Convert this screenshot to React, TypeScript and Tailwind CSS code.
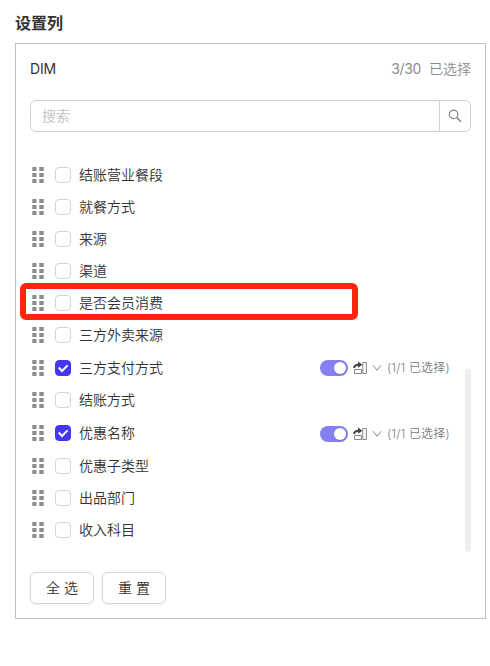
import { useState } from "react";

interface Column {
    name: string;
    checked?: boolean;
    highlighted?: boolean;
}

const initialColumns: Column[] = [
    { name: "结账营业餐段" },
    { name: "就餐方式" },
    { name: "来源" },
    { name: "渠道" },
    { name: "是否会员消费", highlighted: true },
    { name: "三方外卖来源" },
    { name: "三方支付方式", checked: true },
    { name: "结账方式" },
    { name: "优惠名称", checked: true },
    { name: "优惠子类型" },
    { name: "出品部门" },
    { name: "收入科目" },
]

function DragHandle() {
    return (
        <svg width="12" height="16" viewBox="0 0 12 16" fill="#8c8c8c" className="ml-0.5 shrink-0 cursor-move">
            {[0, 6, 12].map(y => (
                <g key={y}>
                    <rect x="0.3" y={y} width="4.2" height="4" />
                    <rect x="7.3" y={y} width="4.4" height="4" />
                </g>
            ))}
        </svg>
    )
}

function Checkbox({ checked, onClick }: { checked?: boolean; onClick: () => void }) {
    return (
        <button
            role="checkbox"
            aria-checked={!!checked}
            onClick={onClick}
            className={`ml-[11px] size-4 shrink-0 rounded border ${checked ? "border-[#4338ee] bg-[#4338ee]" : "border-[#d4d4d4] bg-white"}`}
        >
            {checked && (
                <svg width="14" height="14" viewBox="0 0 14 14" fill="none" stroke="#fff" strokeWidth="2">
                    <path d="M2.7 6.5L6 10L11.6 4.4" />
                </svg>
            )}
        </button>
    )
}

function TransposeIcon() {
    return (
        <svg width="14" height="14" viewBox="0 0 14 14" fill="none" stroke="#888" className="ml-[5px]">
            <path d="M1.5 8.5H8.5V12.5H1.5Z" />
            <path d="M9.8 1.5H13.4V12.5H9.8Z" />
            <path d="M0.8 6.8C1.6 4.6 3.2 3.7 5.5 3.7" stroke="#444" strokeWidth="2" />
            <path d="M5 0.6L9.4 3.8L5 6.8Z" fill="#444" stroke="none" />
        </svg>
    )
}

function RowSettings() {
    return (
        <div className="ml-auto flex items-center pt-[0.3px] pr-[21px]">
            <div className="flex h-4 w-7 items-center justify-end rounded-full bg-[#8480f2] pr-0.5">
                <div className="size-3 rounded-full bg-white shadow-sm" />
            </div>
            <TransposeIcon />
            <svg width="10" height="8" viewBox="0 0 10 8" fill="none" stroke="#888" className="ml-[5px]">
                <path d="M1 1.2L5 6.2L9 1.2" />
            </svg>
            <span className="ml-[5px] w-[63px] text-xs tracking-[0.15px] whitespace-nowrap text-[#808080]">(1/1 已选择)</span>
        </div>
    )
}

export default function App() {
    const [columns, setColumns] = useState(initialColumns)

    const toggle = (name: string) => {
        setColumns(columns.map(c => (c.name === name ? { ...c, checked: !c.checked } : c)))
    }

    const setAll = (checked: boolean) => {
        setColumns(columns.map(c => ({ ...c, checked })))
    }

    return (
        <div className="h-[666px] w-[490px] bg-white px-[15px] pt-[11px] font-[Inter,'Noto_Sans_CJK_SC',sans-serif] text-sm font-[350] text-[#333]">
            <h1 className="h-8 text-base leading-6 font-semibold">设置列</h1>
            <div className="h-[576px] w-[471px] border border-[#c0c0c0] px-3.5">
                <div className="flex h-[50px] items-center justify-between">
                    <span className="font-normal tracking-[-0.2px]">DIM</span>
                    <span className="text-[#8c8c8c]"><span className="font-normal tracking-[-0.3px]">3/30</span>&nbsp; 已选择</span>
                </div>
                <div className="mt-1.5 flex h-8 overflow-hidden rounded-md border border-[#d0d0d0]">
                    <input placeholder="搜索" className="min-w-0 flex-1 px-[11px] outline-none placeholder:text-[#bfbfbf]" />
                    <button className="flex w-[31px] items-center justify-center border-l border-[#d0d0d0]">
                        <svg width="14" height="14" viewBox="0 0 14 14" fill="none" stroke="#858585" strokeWidth="1.2">
                            <circle cx="5.6" cy="5.4" r="4.3" />
                            <path d="M8.7 8.6L13 12.7" strokeWidth="1.5" />
                        </svg>
                    </button>
                </div>
                <div className="relative mt-[27px] h-[393px]">
                    {columns.map(column => (
                        <div
                            key={column.name}
                            className={`relative flex items-center ${column.checked ? "h-[33.3px] pt-px" : "h-8"}`}
                        >
                            <DragHandle />
                            <Checkbox checked={column.checked} onClick={() => toggle(column.name)} />
                            <span className="ml-2">{column.name}</span>
                            {column.checked && <RowSettings />}
                            {column.highlighted && (
                                <div className="pointer-events-none absolute -top-1 -left-2.5 h-[37px] w-[338px] rounded-md border-6 border-[#ff240b]" />
                            )}
                        </div>
                    ))}
                    <div className="absolute top-[210px] right-0 h-[183px] w-1.5 rounded-full bg-[#eee]" />
                </div>
                <div className="mt-5 flex gap-2">
                    <button onClick={() => setAll(true)} className="h-8 w-16 rounded-md border border-[#d4d4d4] shadow-xs">全 选</button>
                    <button onClick={() => setAll(false)} className="h-8 w-16 rounded-md border border-[#d4d4d4] shadow-xs">重 置</button>
                </div>
            </div>
        </div>
    )
}
